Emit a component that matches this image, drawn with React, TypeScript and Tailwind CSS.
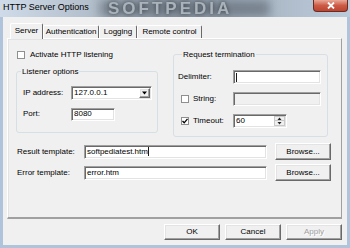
import React from 'react';

const sunken =
  'border-t border-l border-t-[#a0a0a0] border-l-[#a0a0a0] border-r border-b border-r-[#ffffff] border-b-[#ffffff] shadow-[inset_1px_1px_0_#696969,inset_-1px_-1px_0_#e3e3e3]';
const raised =
  'border-t border-l border-t-[#ffffff] border-l-[#ffffff] border-r border-b border-r-[#696969] border-b-[#696969] shadow-[inset_-1px_-1px_0_#a0a0a0,inset_1px_1px_0_#e3e3e3]';

type CheckProps = { checked?: boolean; label: string; gap?: string };

const CheckBox: React.FC<CheckProps> = ({ checked, label, gap = 'gap-[5px]' }) => (
  <label className={`flex items-center ${gap}`}>
    <span className="w-[8px] h-[8px] bg-white border border-[#8e8f8f] flex items-center justify-center shrink-0">
      {checked && (
        <svg width="6" height="6" viewBox="0 0 6 6">
          <path d="M0.5 3 L2.2 4.8 L5.5 0.8" stroke="#000" strokeWidth="1.3" fill="none" />
        </svg>
      )}
    </span>
    <span>{label}</span>
  </label>
);

type BoxProps = { width: string; children?: React.ReactNode; disabled?: boolean; height?: string };

const TextBox: React.FC<BoxProps> = ({ width, children, disabled, height = 'h-[14px]' }) => (
  <div
    className={`${width} ${height} ${sunken} ${disabled ? 'bg-[#f0f0f0]' : 'bg-white'} flex items-center pl-[2px] shrink-0`}
  >
    {children}
  </div>
);

const Caret = () => <span className="w-px h-[9px] bg-[#1a1a1a] inline-block" />;

type BtnProps = { children: React.ReactNode; disabled?: boolean; className?: string };

const Btn: React.FC<BtnProps> = ({ children, disabled, className = 'h-[16px]' }) => (
  <button
    className={`w-[56px] ${className} bg-[#f0f0f0] ${raised} flex items-center justify-center ${
      disabled ? 'text-[#a0a0a0] [text-shadow:1px_1px_0_#ffffff]' : 'text-black'
    }`}
  >
    {children}
  </button>
);

const tabs = [
  { name: 'Server', width: 'w-[33px]', active: true },
  { name: 'Authentication', width: 'w-[56px]' },
  { name: 'Logging', width: 'w-[38px]' },
  { name: 'Remote control', width: 'w-[65px]' },
];

export default function App() {
  return (
    <div className="w-[350px] h-[248px] flex flex-col bg-[#afc4da] text-black text-[8px] leading-[10px] font-['Liberation_Sans',Arial,sans-serif] overflow-hidden">
      {/* title bar */}
      <div className="relative h-[17px] flex items-start justify-between pl-[3px] pr-[2px] bg-gradient-to-r from-[#cfdbe8] via-[#98a4b0] to-[#bccbdb] overflow-hidden">
        <div className="absolute left-[100px] top-0 w-[170px] h-[17px] bg-[#56606a]/60 blur-[5px]" />
        <span className="absolute left-[108px] top-0 text-[17px] leading-[17px] font-bold tracking-[3px] text-[#aab2ba] blur-[0.4px] [text-shadow:0_0_4px_#3a434c]">
          SOFTPEDIA
        </span>
        <span className="relative mt-[2px] text-[9px] leading-[11px]">HTTP Server Options</span>
        <div className="relative w-[35px] h-[12px] rounded-b-[4px] border border-t-0 border-[#6b2a22] bg-gradient-to-b from-[#e8a899] via-[#cc5a45] to-[#bb4530] flex items-center justify-center">
          <svg width="8" height="7" viewBox="0 0 8 7">
            <path d="M1 0.5 L7 6.5 M7 0.5 L1 6.5" stroke="#ffffff" strokeWidth="1.8" />
          </svg>
        </div>
      </div>

      {/* client area */}
      <div className="mx-[3px] h-[228px] bg-[#f0f0f0] flex flex-col pl-[4px] pr-[5px] pt-[6px]">
        <div className="flex items-end h-[15px] pl-[3px]">
          {tabs.map(tab => (
            <div
              key={tab.name}
              className={`${tab.width} flex items-center justify-center border-t border-l border-r border-t-white border-l-white border-r-[#696969] rounded-t-[2px] ${
                tab.active ? 'h-[16px] -mb-px relative z-10 bg-[#f0f0f0] pb-[1px]' : 'h-[13px]'
              }`}
            >
              {tab.name}
            </div>
          ))}
        </div>

        <div className="h-[181px] border-t border-l border-t-white border-l-white border-r border-r-[#a0a0a0] border-b-2 border-b-[#a0a0a0] shadow-[inset_1px_1px_0_#e3e3e3] flex flex-col">
          <div className="flex pl-[8px]">
            <div className="w-[142px] flex flex-col">
              <div className="mt-[10px] h-[11px] pl-[1px] flex items-center">
                <CheckBox label="Activate HTTP listening" />
              </div>
              <fieldset className="mt-[6px] border border-[#d5dfe5] rounded-[3px] pl-[6px] pt-[9px] pb-[11px]">
                <legend className="ml-[-2px] px-[1px] leading-[11px]">Listener options</legend>
                <div className="flex items-center h-[14px]">
                  <span className="w-[48px]">IP address:</span>
                  <div className={`w-[81px] h-[14px] ${sunken} bg-white flex items-center justify-between pl-[2px] pr-[1px]`}>
                    <span>127.0.0.1</span>
                    <span className={`w-[11px] h-[10px] bg-[#f0f0f0] ${raised} flex items-center justify-center`}>
                      <svg width="5" height="4" viewBox="0 0 5 4">
                        <path d="M0 0.5 H5 L2.5 3.5 Z" fill="#000" />
                      </svg>
                    </span>
                  </div>
                </div>
                <div className="flex items-center h-[14px] mt-[7px]">
                  <span className="w-[48px]">Port:</span>
                  <TextBox width="w-[44px]" height="h-[13px]">
                    <span>8080</span>
                  </TextBox>
                </div>
              </fieldset>
            </div>

            <fieldset className="ml-[15px] mt-[10px] w-[155px] border border-[#d5dfe5] rounded-[3px] pl-[4px] pt-[10px] pb-[8px]">
              <legend className="ml-[4px] px-[1px] leading-[11px]">Request termination</legend>
              <div className="flex items-center h-[14px]">
                <span className="w-[55px]">Delimiter:</span>
                <TextBox width="w-[88px]">
                  <Caret />
                </TextBox>
              </div>
              <div className="flex items-center h-[14px] mt-[8px]">
                <div className="w-[55px] pl-[3px]">
                  <CheckBox label="String:" gap="gap-[4px]" />
                </div>
                <TextBox width="w-[88px]" disabled />
              </div>
              <div className="flex items-center h-[14px] mt-[8px]">
                <div className="w-[55px] pl-[3px]">
                  <CheckBox label="Timeout:" gap="gap-[4px]" checked />
                </div>
                <div className={`w-[54px] h-[14px] ${sunken} bg-white flex items-center justify-between pl-[2px] pr-[1px]`}>
                  <span>60</span>
                  <span className="w-[11px] h-[10px] flex flex-col border border-[#c8c8c8] bg-[#f0f0f0]">
                    <span className="h-[4px] flex items-center justify-center border-b border-[#c8c8c8]">
                      <svg width="5" height="3" viewBox="0 0 5 3">
                        <path d="M0.5 3 H4.5 L2.5 0.5 Z" fill="#222" />
                      </svg>
                    </span>
                    <span className="h-[4px] flex items-center justify-center">
                      <svg width="5" height="3" viewBox="0 0 5 3">
                        <path d="M0.5 0 H4.5 L2.5 2.5 Z" fill="#222" />
                      </svg>
                    </span>
                  </span>
                </div>
              </div>
            </fieldset>
          </div>

          <div className="flex items-center h-[17px] mt-[6px] pl-[9px]">
            <span className="w-[67px]">Result template:</span>
            <TextBox width="w-[183px]">
              <span>softpediatest.htm</span>
              <Caret />
            </TextBox>
            <div className="ml-[8px]">
              <Btn className="h-[17px]">Browse...</Btn>
            </div>
          </div>
          <div className="flex items-center h-[17px] mt-[4px] pl-[9px]">
            <span className="w-[67px]">Error template:</span>
            <TextBox width="w-[183px]">
              <span>error.htm</span>
            </TextBox>
            <div className="ml-[8px]">
              <Btn className="h-[17px]">Browse...</Btn>
            </div>
          </div>
        </div>

        <div className="mt-[5px] flex justify-end gap-[5px]">
          <Btn>OK</Btn>
          <Btn>Cancel</Btn>
          <Btn disabled>Apply</Btn>
        </div>
      </div>
    </div>
  );
}
